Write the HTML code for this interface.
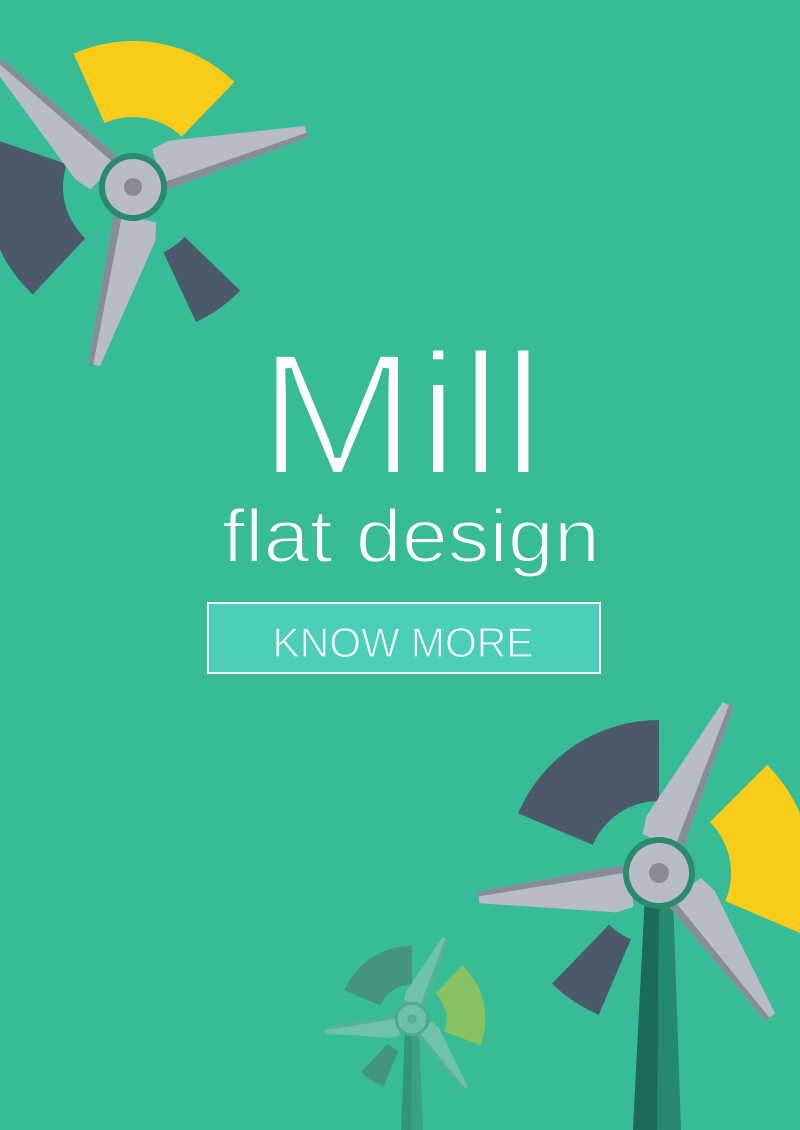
<!DOCTYPE html>
<html><head><meta charset="utf-8"><style>
html,body{margin:0;padding:0;background:#38bc96;}
svg{display:block}
</style></head><body>
<svg width="800" height="1130" viewBox="0 0 800 1130" xmlns="http://www.w3.org/2000/svg">
<defs>
  <path id="bl" d="M28,13 L182,7 L182,-5 L48,-33 L30,-30 Z"/>
  <path id="bs" d="M28,13 L182,7 L183,2 L28,5 Z"/>
</defs>
<rect width="800" height="1130" fill="#38bc96"/>

<!-- Top-left windmill -->
<g transform="translate(133,187)">
  <path transform="rotate(246)" fill="#facc1a" d="M146,0 A146,146 0 0 1 54.7,135.4 L26.2,64.9 A70,70 0 0 0 70,0 Z"/>
  <path transform="rotate(133)" fill="#4a5a6b" d="M147,0 A147,147 0 0 1 59.8,134.3 L28.5,63.9 A70,70 0 0 0 70,0 Z"/>
  <path transform="rotate(44)" fill="#4a5a6b" d="M149,0 A149,149 0 0 1 139.1,53.4 L67.2,25.8 A72,72 0 0 0 72,0 Z"/>
  <g transform="rotate(222)"><use href="#bl" fill="#b8bcc6"/><use href="#bs" fill="#878c99"/></g>
  <g transform="rotate(342)"><use href="#bl" fill="#b8bcc6"/><use href="#bs" fill="#878c99"/></g>
  <g transform="rotate(102)"><use href="#bl" fill="#b8bcc6"/><use href="#bs" fill="#878c99"/></g>
  <circle r="34" fill="#2a8a6e"/>
  <circle r="28" fill="#b8bcc6"/>
  <circle r="9" fill="#868b96"/>
</g>

<!-- Small windmill -->
<polygon points="405,1030 419,1030 423,1130 401,1130" fill="#3aa283"/>
<polygon points="405,1030 412,1030 411,1130 401,1130" fill="#329478"/>
<g transform="translate(412,1019) scale(0.48)">
  <path transform="rotate(203)" fill="#44957f" d="M153,0 A153,153 0 0 1 59.8,140.8 L28.1,66.3 A72,72 0 0 0 72,0 Z"/>
  <path transform="rotate(-47)" fill="#88c260" d="M153,0 A153,153 0 0 1 57.3,141.9 L27,66.8 A72,72 0 0 0 72,0 Z"/>
  <path transform="rotate(113)" fill="#44957f" d="M153,0 A153,153 0 0 1 142.8,54.8 L67.2,25.8 A72,72 0 0 0 72,0 Z"/>
  <g transform="rotate(-68)"><use href="#bl" fill="#6ec3aa"/><use href="#bs" fill="#58b096"/></g>
  <g transform="rotate(52)"><use href="#bl" fill="#6ec3aa"/><use href="#bs" fill="#58b096"/></g>
  <g transform="rotate(172)"><use href="#bl" fill="#6ec3aa"/><use href="#bs" fill="#58b096"/></g>
  <circle r="36" fill="#50a88e"/>
  <circle r="30" fill="#6cbfa8"/>
  <circle r="10" fill="#58ad94"/>
</g>

<!-- Big windmill -->
<polygon points="645,895 673,895 681,1130 633,1130" fill="#25896f"/>
<polygon points="645,895 659,895 657,1130 633,1130" fill="#1b6b5a"/>
<g transform="translate(659,873)">
  <path transform="rotate(203)" fill="#4a5a6b" d="M153,0 A153,153 0 0 1 59.8,140.8 L28.1,66.3 A72,72 0 0 0 72,0 Z"/>
  <path transform="rotate(-45)" fill="#facc1a" d="M153,0 A153,153 0 0 1 57.3,141.9 L27,66.8 A72,72 0 0 0 72,0 Z"/>
  <path transform="rotate(113)" fill="#4a5a6b" d="M154,0 A154,154 0 0 1 143.8,55.2 L67.2,25.8 A72,72 0 0 0 72,0 Z"/>
  <g transform="rotate(-68)"><use href="#bl" fill="#b8bcc6"/><use href="#bs" fill="#878c99"/></g>
  <g transform="rotate(52)"><use href="#bl" fill="#b8bcc6"/><use href="#bs" fill="#878c99"/></g>
  <g transform="rotate(172)"><use href="#bl" fill="#b8bcc6"/><use href="#bs" fill="#878c99"/></g>
  <circle r="36" fill="#2a8a6e"/>
  <circle r="30" fill="#b8bcc6"/>
  <circle r="10" fill="#868b96"/>
</g>

<!-- Text -->
<text x="401" y="475" text-anchor="middle" font-family="Liberation Sans, sans-serif" font-size="176" fill="#fff" stroke="#38bc96" stroke-width="6" textLength="287" lengthAdjust="spacingAndGlyphs">Mill</text>
<text x="411" y="562" text-anchor="middle" font-family="Liberation Sans, sans-serif" font-size="75" fill="#fff" stroke="#38bc96" stroke-width="2" textLength="378" lengthAdjust="spacingAndGlyphs">flat design</text>
<rect x="208" y="603" width="392" height="70" fill="#4bcfb8" stroke="#fff" stroke-width="2"/>
<text x="403" y="657" text-anchor="middle" font-family="Liberation Sans, sans-serif" font-size="42" fill="#fff" stroke="#4bcfb8" stroke-width="1.2" textLength="261" lengthAdjust="spacingAndGlyphs">KNOW MORE</text>
</svg>
</body></html>
